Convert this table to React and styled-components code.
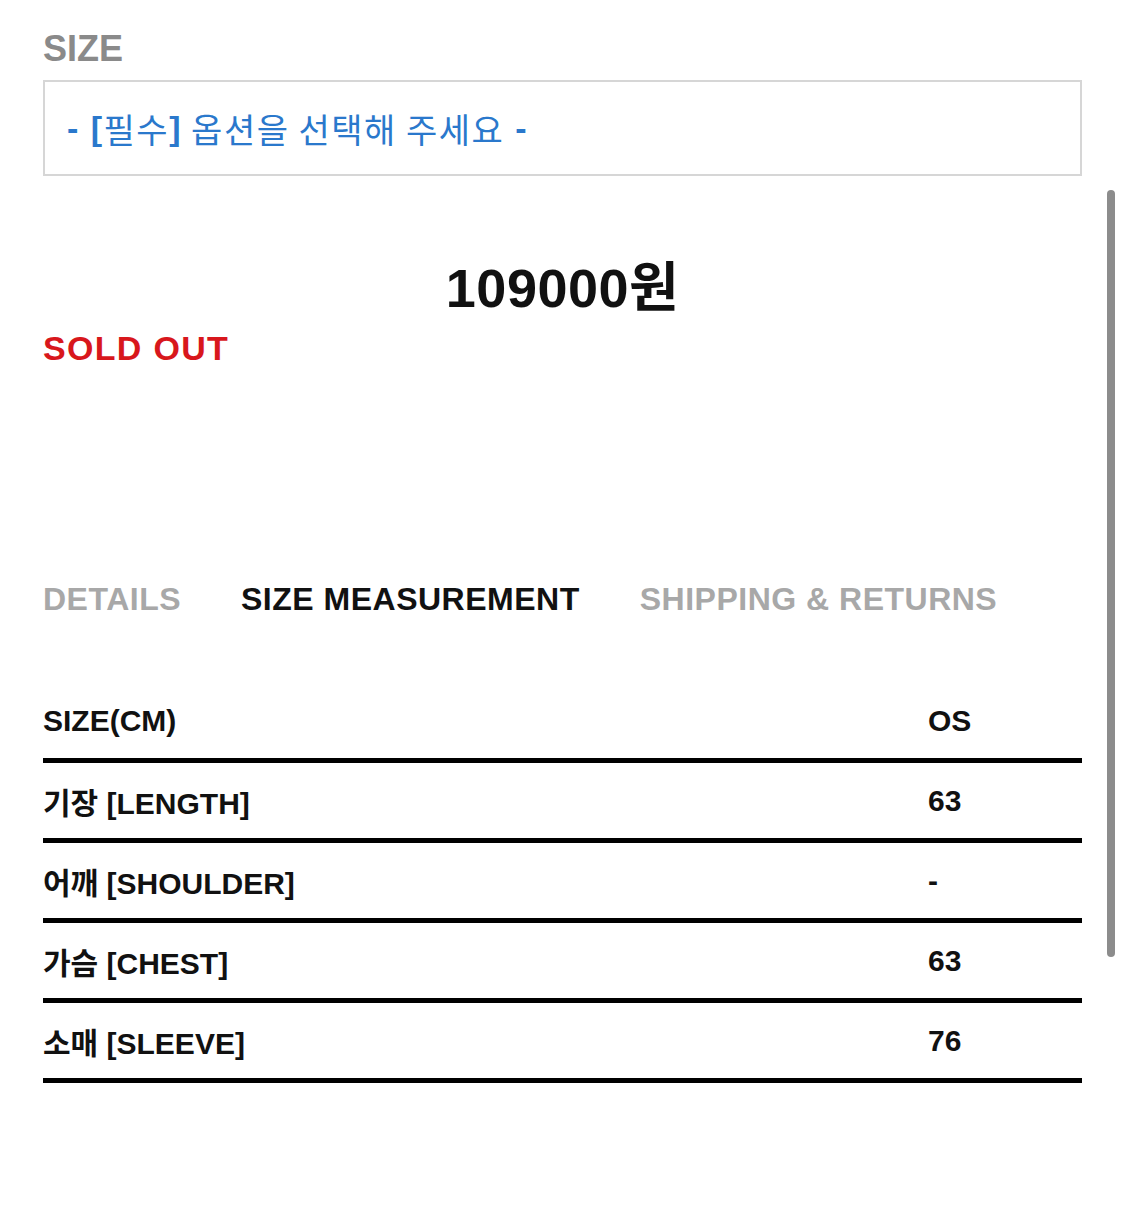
import React from 'react'
import styled, { createGlobalStyle } from 'styled-components'

const GlobalStyle = createGlobalStyle`
  html, body {
    margin: 0;
    padding: 0;
    background: #fff;
  }
  body {
    font-family: "Liberation Sans", "Noto Sans CJK KR", sans-serif;
    color: #111;
  }
`

const Page = styled.div`
  position: relative;
  width: 1125px;
  height: 1206px;
  padding: 27px 43px 0 43px;
  box-sizing: border-box;
`

const Label = styled.div`
  font-size: 36px;
  font-weight: 700;
  color: #8a8a8a;
  line-height: 44px;
  height: 53px;
`

const Select = styled.div`
  height: 96px;
  border: 2px solid #d6d6d6;
  box-sizing: border-box;
  display: flex;
  align-items: center;
  padding-left: 22px;
  font-size: 34px;
  letter-spacing: 1.5px;
  color: #2a78cc;
  font-family: "Noto Sans CJK KR", "Liberation Sans", sans-serif;

  b {
    font-weight: 700;
    font-family: "Liberation Sans", "Noto Sans CJK KR", sans-serif;
  }
`

const Price = styled.div`
  margin-top: 82px;
  text-align: center;
  font-size: 54px;
  font-weight: 700;
  line-height: 60px;
  color: #111;
  letter-spacing: 0.5px;
`

const SoldOut = styled.div`
  margin-top: 8px;
  font-size: 34px;
  font-weight: 700;
  color: #d8171c;
  line-height: 44px;
  letter-spacing: 1.3px;
`

const Tabs = styled.div`
  display: flex;
  gap: 60px;
  margin-top: 209px;
`

const Tab = styled.div`
  font-size: 32px;
  font-weight: 700;
  line-height: 40px;
  letter-spacing: 0.5px;
  color: ${(p) => (p.$active ? '#111' : '#a8a8a8')};
`

const Table = styled.div`
  margin-top: 64px;
`

const Row = styled.div`
  display: grid;
  grid-template-columns: 885px 1fr;
  align-items: center;
  height: 80px;
  box-sizing: border-box;
  border-bottom: 5px solid #000;
  padding-top: 1px;
  font-size: 30px;
  font-weight: 700;
  color: #111;
`

const Cell = styled.div`
  font-family: "Liberation Sans", "Noto Sans CJK KR", sans-serif;
`

const Scrollbar = styled.div`
  position: absolute;
  left: 1107px;
  top: 190px;
  width: 8px;
  height: 767px;
  border-radius: 4px;
  background: #8c8c8c;
`

const rows = [
  ['SIZE(CM)', 'OS'],
  ['기장 [LENGTH]', '63'],
  ['어깨 [SHOULDER]', '-'],
  ['가슴 [CHEST]', '63'],
  ['소매 [SLEEVE]', '76'],
]

export default function App() {
  return (
    <>
      <GlobalStyle />
      <Page>
        <Label>SIZE</Label>
        <Select>
          <b>- [</b>필수<b>]</b>&nbsp;옵션을 선택해 주세요 <b>&nbsp;-</b>
        </Select>
        <Price>109000원</Price>
        <SoldOut>SOLD OUT</SoldOut>
        <Tabs>
          <Tab>DETAILS</Tab>
          <Tab $active>SIZE MEASUREMENT</Tab>
          <Tab>SHIPPING &amp; RETURNS</Tab>
        </Tabs>
        <Table>
          {rows.map((r, i) => (
            <Row key={i}>
              <Cell>{r[0]}</Cell>
              <Cell>{r[1]}</Cell>
            </Row>
          ))}
        </Table>
        <Scrollbar />
      </Page>
    </>
  )
}
